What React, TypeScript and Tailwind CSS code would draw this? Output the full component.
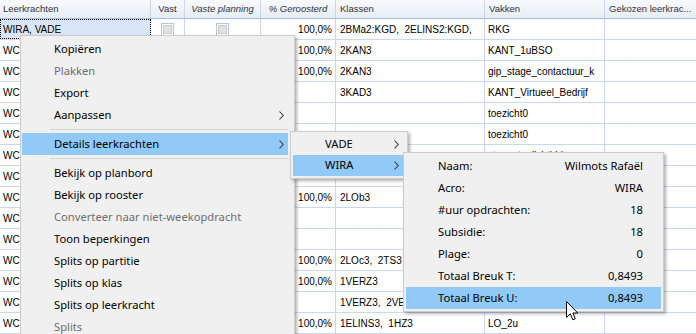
import React from 'react';

const W = ['w-[151px]', 'w-[34px]', 'w-[76px]', 'w-[75px]', 'w-[149px]', 'w-[120px]', 'w-[91px]'];

type Row = { lk: string; pct?: string; kl?: string; vk?: string; sel?: boolean; cb?: boolean };

const rows: Row[] = [
  { lk: 'WIRA, VADE', pct: '100,0%', kl: '2BMa2:KGD,  2ELINS2:KGD,', vk: 'RKG', sel: true, cb: true },
  { lk: 'WC', pct: '100,0%', kl: '2KAN3', vk: 'KANT_1uBSO' },
  { lk: 'WC', pct: '100,0%', kl: '2KAN3', vk: 'gip_stage_contactuur_k' },
  { lk: 'WC', kl: '3KAD3', vk: 'KANT_Virtueel_Bedrijf' },
  { lk: 'WC', vk: 'toezicht0' },
  { lk: 'WC', vk: 'toezicht0' },
  { lk: 'WC', vk: 'stage_toelichtbld' },
  { lk: 'WC' },
  { lk: 'WC', pct: '100,0%', kl: '2LOb3' },
  { lk: 'WC' },
  { lk: 'WC' },
  { lk: 'WC', pct: '100,0%', kl: '2LOc3,  2TS3' },
  { lk: 'WC', pct: '100,0%', kl: '1VERZ3' },
  { lk: 'WC', kl: '1VERZ3,  2VERZ3' },
  { lk: 'WC', pct: '100,0%', kl: '1ELINS3,  1HZ3', vk: 'LO_2u' },
];

const cell = 'shrink-0 border-r border-[#c8d8ef] overflow-hidden whitespace-pre flex items-center';

function CheckBox() {
  return (
    <div className="w-[13px] h-[13px] border border-[#b4c7e2] p-[1px] bg-white">
      <div className="w-full h-full border border-[#c9c9c9] bg-[#e2e2e2]" />
    </div>
  );
}

function Chevron() {
  return (
    <svg width="5" height="9" viewBox="0 0 5 9" className="shrink-0">
      <path d="M0.5 0.5 L4.2 4.5 L0.5 8.5" fill="none" stroke="#3a3a3a" strokeWidth="1.1" />
    </svg>
  );
}

function MenuItem({ label, disabled, sub, hl }: { label: string; disabled?: boolean; sub?: boolean; hl?: boolean }) {
  return (
    <div className={`h-[22px] flex items-center pl-[32px] pr-[4px] ${hl ? 'bg-[#91c9f7]' : ''} ${disabled ? 'text-[#6f6f6f]' : 'text-black'}`}>
      <span>{label}</span>
      {sub && (
        <span className="ml-auto">
          <Chevron />
        </span>
      )}
    </div>
  );
}

function Sep() {
  return (
    <div className="h-[7px] flex items-center pl-[28px]">
      <div className="h-px w-full bg-[#d5d5d5]" />
    </div>
  );
}

const details: [string, string][] = [
  ['Naam:', 'Wilmots Rafaël'],
  ['Acro:', 'WIRA'],
  ['#uur opdrachten:', '18'],
  ['Subsidie:', '18'],
  ['Plage:', '0'],
  ['Totaal Breuk T:', '0,8493'],
  ['Totaal Breuk U:', '0,8493'],
];

export default function App() {
  const menuFont = "font-['Segoe_UI','Noto_Sans',sans-serif] text-[11.2px]";
  return (
    <div className="relative w-[696px] h-[334px] overflow-hidden bg-white font-['Liberation_Sans',Arial,sans-serif] text-[10px] text-black">
      {/* header */}
      <div className="flex h-[19px] border-b border-[#a9bedb] bg-linear-to-b from-[#f8fafd] to-[#e6edf6] text-[#333] text-[9.5px]">
        <div className={`${cell} ${W[0]} border-[#c5d3e6] px-[3px]`}>Leerkrachten</div>
        <div className={`${cell} ${W[1]} border-[#c5d3e6] justify-center`}>Vast</div>
        <div className={`${cell} ${W[2]} border-[#c5d3e6] justify-center italic`}>Vaste planning</div>
        <div className={`${cell} ${W[3]} border-[#c5d3e6] justify-center italic`}>% Geroosterd</div>
        <div className={`${cell} ${W[4]} border-[#c5d3e6] px-[4px]`}>Klassen</div>
        <div className={`${cell} ${W[5]} border-[#c5d3e6] px-[4px]`}>Vakken</div>
        <div className={`${cell} ${W[6]} border-r-0 px-[4px]`}>Gekozen leerkrac...</div>
      </div>
      {/* rows */}
      {rows.map((r, i) => (
        <div key={i} className="flex h-[21px] border-b border-[#c8d8ef]">
          <div className={`${cell} ${W[0]} px-[3px] ${r.sel ? 'bg-[#dae6f7] outline-1 outline-dotted outline-black -outline-offset-1' : ''}`}>{r.lk}</div>
          <div className={`${cell} ${W[1]} justify-center`}>{r.cb && <CheckBox />}</div>
          <div className={`${cell} ${W[2]} justify-center`}>{r.cb && <CheckBox />}</div>
          <div className={`${cell} ${W[3]} justify-end pr-[3px]`}>{r.pct}</div>
          <div className={`${cell} ${W[4]} px-[4px]`}>{r.kl}</div>
          <div className={`${cell} ${W[5]} px-[3px]`}>{r.vk}</div>
          <div className={`${cell} ${W[6]} border-r-0`} />
        </div>
      ))}

      {/* context menu */}
      <div className={`absolute left-[20px] top-[35px] w-[275px] h-[310px] border border-[#cccccc] bg-[#f0f0f0] pt-[2px] pl-[1px] pr-[6px] shadow-[2px_2px_3px_rgba(0,0,0,0.3)] ${menuFont}`}>
        <MenuItem label="Kopiëren" />
        <MenuItem label="Plakken" disabled />
        <MenuItem label="Export" />
        <MenuItem label="Aanpassen" sub />
        <Sep />
        <MenuItem label="Details leerkrachten" sub hl />
        <Sep />
        <MenuItem label="Bekijk op planbord" />
        <MenuItem label="Bekijk op rooster" />
        <MenuItem label="Converteer naar niet-weekopdracht" disabled />
        <MenuItem label="Toon beperkingen" />
        <MenuItem label="Splits op partitie" />
        <MenuItem label="Splits op klas" />
        <MenuItem label="Splits op leerkracht" />
        <MenuItem label="Splits" disabled />
      </div>

      {/* submenu 1 */}
      <div className={`absolute left-[290px] top-[131px] w-[118px] border border-[#cccccc] bg-[#f0f0f0] py-[2px] pl-[2px] pr-[4px] shadow-[2px_2px_3px_rgba(0,0,0,0.3)] ${menuFont}`}>
        <div className="h-[21px] flex items-center pl-[32px] pr-[4px]">
          <span>VADE</span>
          <span className="ml-auto"><Chevron /></span>
        </div>
        <div className="h-[21px] flex items-center pl-[32px] pr-[4px] bg-[#91c9f7]">
          <span>WIRA</span>
          <span className="ml-auto"><Chevron /></span>
        </div>
      </div>

      {/* details menu */}
      <div className={`absolute left-[403px] top-[152px] w-[261px] h-[160px] border border-[#cccccc] bg-[#f0f0f0] py-[2px] px-[2px] shadow-[2px_2px_3px_rgba(0,0,0,0.3)] ${menuFont}`}>
        {details.map(([k, v], i) => (
          <div key={k} className={`h-[22px] flex items-center justify-between pl-[32px] pr-[18px] ${i === details.length - 1 ? 'bg-[#91c9f7]' : ''}`}>
            <span>{k}</span>
            <span>{v}</span>
          </div>
        ))}
      </div>

      {/* mouse cursor */}
      <svg className="absolute left-[566px] top-[301px]" width="13" height="21" viewBox="0 0 13 21">
        <path d="M0.5 0.5 L0.5 16.5 L4.3 12.8 L6.8 18.8 L9.3 17.8 L6.9 12 L11.8 12 Z" fill="white" stroke="black" strokeWidth="1" strokeLinejoin="miter" />
      </svg>
    </div>
  );
}
